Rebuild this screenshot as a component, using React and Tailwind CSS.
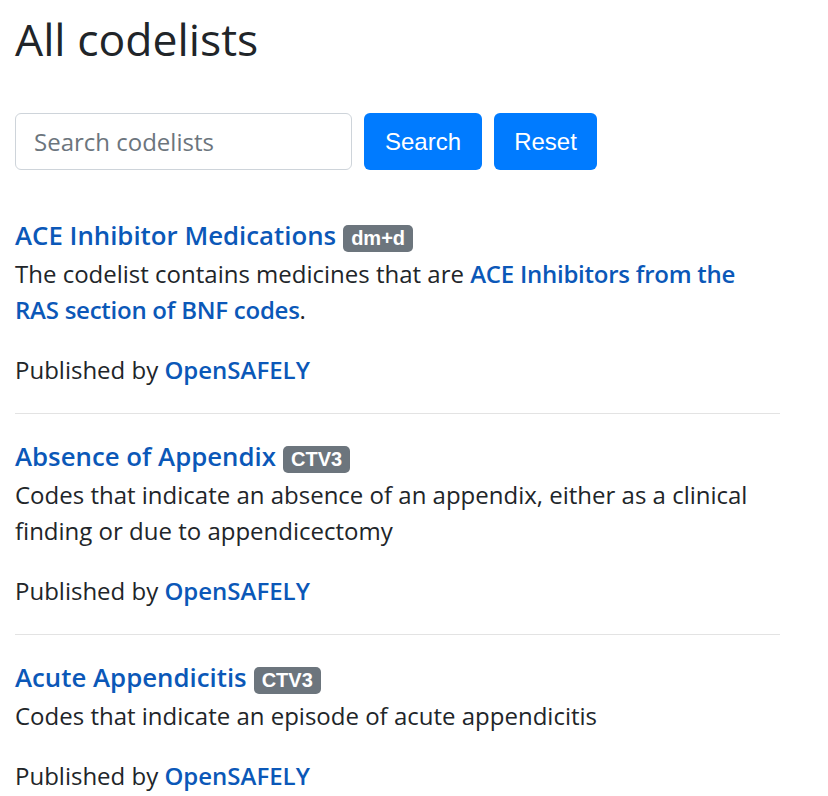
const codelists = [
  {
    id: 1,
    name: 'ACE Inhibitor Medications',
    coding: 'dm+d',
    description: (
      <>
        The codelist contains medicines that are{' '}
        <a href="#" className="font-semibold tracking-[-0.25px] text-[#0b58b8]">ACE Inhibitors from the RAS section of BNF codes</a>.
      </>
    ),
  },
  {
    id: 2,
    name: 'Absence of Appendix',
    coding: 'CTV3',
    description: 'Codes that indicate an absence of an appendix, either as a clinical finding or due to appendicectomy',
  },
  {
    id: 3,
    name: 'Acute Appendicitis',
    coding: 'CTV3',
    description: 'Codes that indicate an episode of acute appendicitis',
  },
];

export default function App() {
  return (
    <div className="min-h-screen bg-white px-[15px] font-['Open_Sans',sans-serif] text-[24px] leading-[36px] text-[#212529]">
      <h1 className="pt-[14px] text-[44.5px] leading-[50px] font-normal">All codelists</h1>

      <form className="mt-[49px] flex gap-[12px]">
        <input
          type="text"
          placeholder="Search codelists"
          className="h-[57px] w-[337px] rounded-[6px] border border-[#ced4da] px-[18px] text-[24px] placeholder:text-[#6c757d]"
        />
        <button type="button" className="h-[57px] w-[118px] rounded-[6px] bg-[#007bff] font-['Liberation_Sans',sans-serif] text-[24px] text-white">
          Search
        </button>
        <button type="button" className="h-[57px] w-[103px] rounded-[6px] bg-[#007bff] font-['Liberation_Sans',sans-serif] text-[24px] text-white">
          Reset
        </button>
      </form>

      <div className="mt-[49px] max-w-[765px]">
        {codelists.map((c, i) => (
          <div key={c.id}>
            {i > 0 && <hr className="mt-[25px] mb-[26px] border-0 border-t border-[#e3e3e3]" />}
            <div className="flex h-[32px] items-baseline gap-[7px]">
              <a href="#" className="text-[25.8px] leading-[32px] font-semibold text-[#0b58b8]">{c.name}</a>
              <span className="rounded-[5px] bg-[#6c757d] px-[8px] py-[3.5px] font-['Liberation_Sans',sans-serif] text-[20px] leading-[20px] font-bold text-white">
                {c.coding}
              </span>
            </div>
            <p className="mt-[5px] mb-[24px]">{c.description}</p>
            <p>
              Published by <a href="#" className="font-semibold text-[#0b58b8]">OpenSAFELY</a>
            </p>
          </div>
        ))}
      </div>
    </div>
  );
}
